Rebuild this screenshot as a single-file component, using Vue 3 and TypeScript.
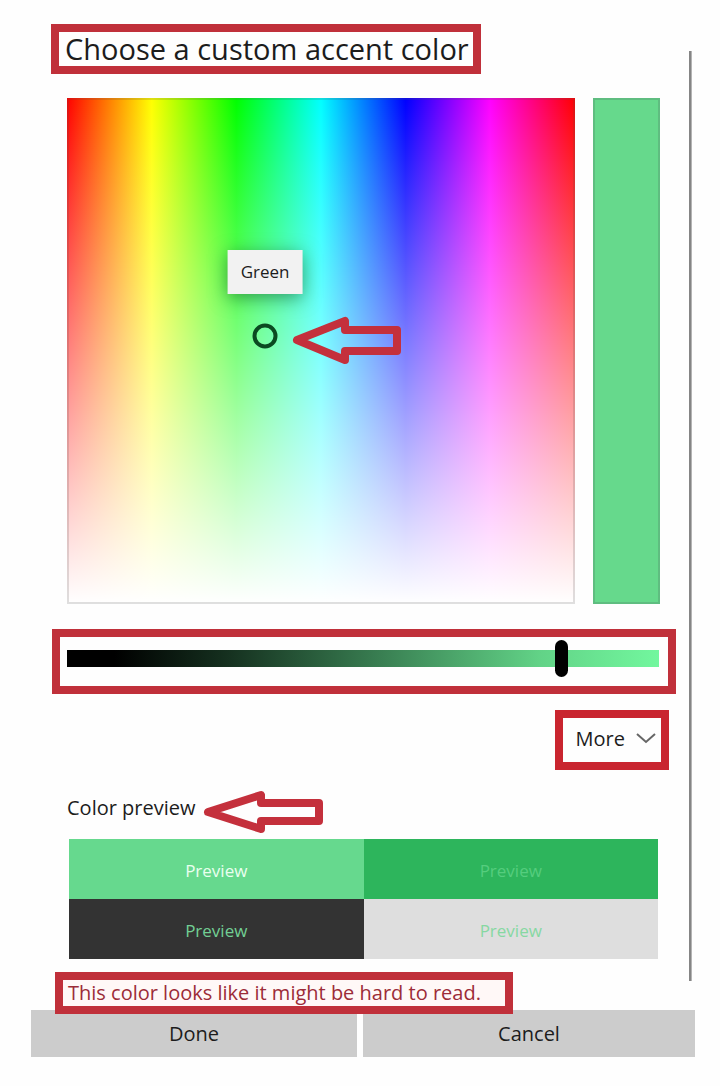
<script setup lang="ts">
import { ref } from 'vue'

interface Sample {
  id: string
  tone: string
}

const brightness = ref<number>(215)
const samples: Sample[] = [
  { id: 'accent', tone: 'light-text' },
  { id: 'accent-dark', tone: 'accent-on-dark' },
  { id: 'dark', tone: 'accent-on-black' },
  { id: 'neutral', tone: 'accent-on-grey' },
]
</script>

<template>
  <main class="dialog">
    <div class="body">
      <div class="content">
        <h1 class="title callout">Choose a custom accent color</h1>

        <div class="picker">
          <div class="spectrum">
            <div class="tooltip" role="tooltip">Green</div>
            <button class="marker" type="button" aria-label="Selected color: Green"></button>
            <svg class="arrow spectrum-arrow" width="110" height="48" viewBox="0 0 110 48" aria-hidden="true">
              <path d="M6 24 L54 5 V14 H106 V35 H54 V44 Z" />
            </svg>
          </div>
          <div class="swatch"></div>
        </div>

        <div class="slider callout">
          <input v-model.number="brightness" type="range" min="0" max="255" aria-label="Brightness" />
        </div>

        <button class="more callout" type="button">
          More
          <svg width="20" height="12" viewBox="0 0 20 12" aria-hidden="true">
            <path d="M1 1 L10 9 L19 1" />
          </svg>
        </button>

        <div class="preview-heading">
          <h2>Color preview</h2>
          <svg class="arrow" width="122" height="44" viewBox="0 0 122 44" aria-hidden="true">
            <path d="M6 22 L59 5 V13 H117 V31 H59 V39 Z" />
          </svg>
        </div>

        <div class="samples">
          <div v-for="s in samples" :key="s.id" class="sample" :class="s.tone">Preview</div>
        </div>

        <p class="warning callout">This color looks like it might be hard to read.</p>
      </div>
      <div class="rail"></div>
    </div>

    <div class="actions">
      <button type="button">Done</button>
      <button type="button">Cancel</button>
    </div>
  </main>
</template>

<style>
body {
  margin: 0;
  background: #fefefe;
}
</style>

<style scoped>
* {
  box-sizing: border-box;
}

.dialog {
  padding: 24px 25px 28px 31px;
  font-family: 'Open Sans', 'Noto Sans', sans-serif;
  font-size: 20px;
  line-height: 26px;
  color: #1c1c1c;
}

button {
  font: inherit;
  color: inherit;
  margin: 0;
}

.body {
  display: grid;
  grid-template-columns: 1fr 3px;
  column-gap: 13px;
  padding: 0 3px 0 20px;
}

.content {
  display: flex;
  flex-direction: column;
  align-items: flex-start;
}

.rail {
  margin: 27px 0 29px;
  background: #858585;
  border-right: 1px solid #b4b4b4;
}

.callout {
  border: 8px solid #c0303a;
}

.title {
  margin: 0;
  padding: 0 4px 0 6px;
  font-size: 29px;
  line-height: 34px;
  font-weight: 400;
  white-space: nowrap;
}

.picker {
  align-self: stretch;
  display: grid;
  grid-template-columns: 508fr 67fr;
  column-gap: 18px;
  margin: 24px 16px 0;
}

.spectrum {
  position: relative;
  aspect-ratio: 508 / 506;
  background:
    linear-gradient(to bottom, rgba(255, 255, 255, 0), #fff),
    linear-gradient(to right, #f00, #ff0, #0f0, #0ff, #00f, #f0f, #f00);
}

.spectrum::after {
  content: '';
  position: absolute;
  inset: 0;
  border: 2px solid rgba(80, 80, 80, 0.18);
}

.swatch {
  background: #66d98c;
  border: 2px solid #5fbd80;
}

.tooltip {
  position: absolute;
  left: 39%;
  top: 30%;
  transform: translateX(-50%);
  padding: 9px 13px;
  background: #f2f2f2;
  font-size: 17px;
  box-shadow: 0 4px 18px rgba(0, 60, 20, 0.5);
}

.marker {
  position: absolute;
  left: 39%;
  top: 47%;
  width: 25px;
  height: 25px;
  transform: translate(-50%, -50%);
  padding: 0;
  border: 4px solid #0b4a22;
  border-radius: 50%;
  background: transparent;
}

.arrow {
  display: block;
  fill: none;
  stroke: #c4303c;
  stroke-width: 8;
  stroke-linejoin: round;
}

.spectrum-arrow {
  position: absolute;
  left: 44%;
  top: 43%;
}

.slider {
  align-self: stretch;
  margin: 25px 0 0 1px;
  padding: 3px 9px 9px 7px;
}

.slider input {
  display: block;
  width: 100%;
  height: 37px;
  margin: 0;
  appearance: none;
  background: transparent;
}

.slider input::-webkit-slider-runnable-track {
  height: 17px;
  background: linear-gradient(to right, #000 8%, #15301f 27%, #3c8556 55%, #62d387 80%, #72f79e);
}

.slider input::-webkit-slider-thumb {
  appearance: none;
  width: 13px;
  height: 37px;
  margin-top: -10px;
  border-radius: 7px;
  background: #000;
}

.more {
  align-self: flex-end;
  display: flex;
  align-items: center;
  gap: 11px;
  margin: 16px 7px 0 0;
  padding: 8px 5px 10px 13px;
  border-color: #c9252f;
  background: transparent;
}

.more svg {
  fill: none;
  stroke: #666;
  stroke-width: 2;
}

.preview-heading {
  display: flex;
  align-items: flex-start;
  gap: 6px;
  margin: 20px 0 0 16px;
}

.preview-heading h2 {
  margin: 5px 0 0;
  font-size: 20px;
  font-weight: 400;
}

.samples {
  align-self: stretch;
  display: grid;
  grid-template-columns: 1fr 1fr;
  grid-auto-rows: 60px;
  margin: 5px 18px 0;
}

.sample {
  display: flex;
  align-items: center;
  justify-content: center;
  padding-top: 3px;
  font-size: 17px;
}

.light-text {
  background: #66d98e;
  color: #eafff0;
}

.accent-on-dark {
  background: #2db55c;
  color: #55cd7e;
}

.accent-on-black {
  background: #333;
  color: #72cf94;
}

.accent-on-grey {
  background: #dedede;
  color: #86d8a2;
}

.warning {
  position: relative;
  z-index: 1;
  margin: 13px 0 -4px 4px;
  padding: 0 24px 0 5px;
  background: #fff8f7;
  color: #9c2c38;
}

.actions {
  display: grid;
  grid-template-columns: 326fr 332fr;
  column-gap: 6px;
}

.actions button {
  height: 47px;
  padding: 0;
  border: 0;
  background: #ccc;
}
</style>
